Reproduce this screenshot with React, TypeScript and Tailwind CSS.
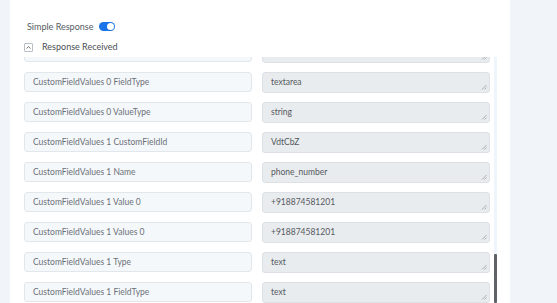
import React from "react";

const rows: [string, string][] = [
  ["", ""],
  ["CustomFieldValues 0 FieldType", "textarea"],
  ["CustomFieldValues 0 ValueType", "string"],
  ["CustomFieldValues 1 CustomFieldId", "VdtCbZ"],
  ["CustomFieldValues 1 Name", "phone_number"],
  ["CustomFieldValues 1 Value 0", "+918874581201"],
  ["CustomFieldValues 1 Values 0", "+918874581201"],
  ["CustomFieldValues 1 Type", "text"],
  ["CustomFieldValues 1 FieldType", "text"],
];

function Grip() {
  return (
    <svg width="6" height="6" viewBox="0 0 6 6" className="absolute right-[2px] bottom-[2px]">
      <path d="M5.5 1 L1 5.5 M5.5 3.5 L3.5 5.5" stroke="#9aa0a6" strokeWidth="0.8" />
    </svg>
  );
}

export default function App() {
  return (
    <div
      className="flex h-[303px] w-full overflow-hidden bg-[#f1f4f8]"
      style={{ fontFamily: "Lato, 'Open Sans', sans-serif" }}
    >
      <div className="w-[10px] shrink-0" />
      <div className="flex w-[500px] shrink-0 flex-col bg-white pl-[14px]">
        <div className="mt-[16px] flex h-[18px] items-center gap-[6px] pl-[3px] pt-[3px]">
          <span className="text-[9px] text-[#555b62]">Simple Response</span>
          <span className="relative inline-block h-[9px] w-[16px] rounded-full bg-[#1a73e8]">
            <span className="absolute right-[1px] top-[1px] h-[7px] w-[7px] rounded-full bg-white" />
          </span>
        </div>
        <div className="mt-[4px] flex h-[18px] items-center gap-[9px]">
          <span className="flex h-[9px] w-[9px] items-center justify-center rounded-[1px] border border-[#b8bec5] bg-white">
            <svg width="5" height="3" viewBox="0 0 5 3">
              <path d="M0.5 2.5 L2.5 0.6 L4.5 2.5" fill="none" stroke="#555" strokeWidth="0.8" />
            </svg>
          </span>
          <span className="text-[9px] text-[#4a4f55]">Response Received</span>
        </div>
        <div className="mt-[1px] flex h-[246px] overflow-hidden">
          <div className="mt-[-15px] flex w-[466px] flex-col gap-[10px]">
            {rows.map(([k, v], i) => (
              <div key={i} className="flex h-[20px] shrink-0 gap-[10px]">
                <div className="flex h-[20px] w-[228px] items-center rounded-[3px] border border-[#e2e7ec] bg-[#f5f8fb] pl-[8px] text-[8.5px] text-[#6b7078]">
                  {k}
                </div>
                <div className="relative flex h-[21px] w-[228px] items-center rounded-[3px] border border-[#dde1e6] bg-[#e9ecef] pl-[8px] text-[8.5px] text-[#55595e]">
                  {v}
                  <Grip />
                </div>
              </div>
            ))}
          </div>
          <div className="ml-[4px] flex h-full w-[3px] flex-col justify-end bg-[#eef5fd]">
            <div className="h-[49px] w-[3px] rounded-[1px] bg-[#5f6368]" />
          </div>
        </div>
      </div>
      <div className="flex-1" />
    </div>
  );
}
